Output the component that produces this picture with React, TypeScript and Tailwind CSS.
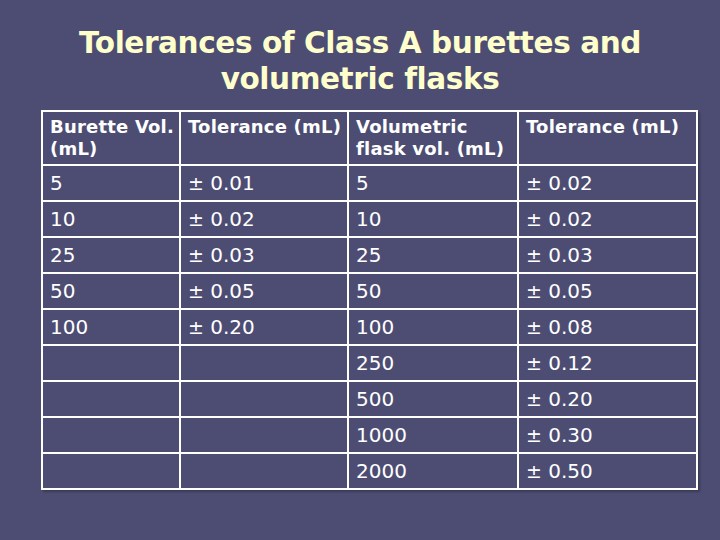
import React from 'react';

const rows: [string, string, string, string][] = [
  ['5', '0.01', '5', '0.02'],
  ['10', '0.02', '10', '0.02'],
  ['25', '0.03', '25', '0.03'],
  ['50', '0.05', '50', '0.05'],
  ['100', '0.20', '100', '0.08'],
  ['', '', '250', '0.12'],
  ['', '', '500', '0.20'],
  ['', '', '1000', '0.30'],
  ['', '', '2000', '0.50'],
];

function Tol({ v }: { v: string }) {
  if (!v) return null;
  return (
    <span>
      <span className="text-[19px]">±</span> {v}
    </span>
  );
}

export default function App() {
  const cell = 'bg-[#4d4d73] pl-[7px] text-white';
  const head = `${cell} pt-[4px] text-[18px] font-bold leading-[22px] tracking-[0.2px]`;
  return (
    <div className="w-[720px] h-[540px] bg-[#4d4d73] overflow-hidden" style={{ fontFamily: '"DejaVu Sans", Verdana, sans-serif' }}>
      <h1 className="pt-[25px] text-center text-[29.5px] font-bold leading-[36px] text-[#ffffcc] tracking-[-0.4px]">
        Tolerances of Class A burettes and
        <br />
        volumetric flasks
      </h1>
      <div className="ml-[41px] mt-[13px] w-[657px] grid grid-cols-[136px_166px_168px_177px] grid-rows-[52px_repeat(9,34px)] gap-[2px] bg-white p-[2px] shadow-[2px_2px_2px_rgba(0,0,0,0.25)]">
        <div className={head}>Burette Vol.<br />(mL)</div>
        <div className={head}>Tolerance (mL)</div>
        <div className={head}>Volumetric<br />flask vol. (mL)</div>
        <div className={head}>Tolerance (mL)</div>
        {rows.map((r, i) => (
          <React.Fragment key={i}>
            <div className={`${cell} text-[20px] leading-[34px]`}>{r[0]}</div>
            <div className={`${cell} text-[20px] leading-[34px]`}><Tol v={r[1]} /></div>
            <div className={`${cell} text-[20px] leading-[34px]`}>{r[2]}</div>
            <div className={`${cell} text-[20px] leading-[34px]`}><Tol v={r[3]} /></div>
          </React.Fragment>
        ))}
      </div>
    </div>
  );
}
